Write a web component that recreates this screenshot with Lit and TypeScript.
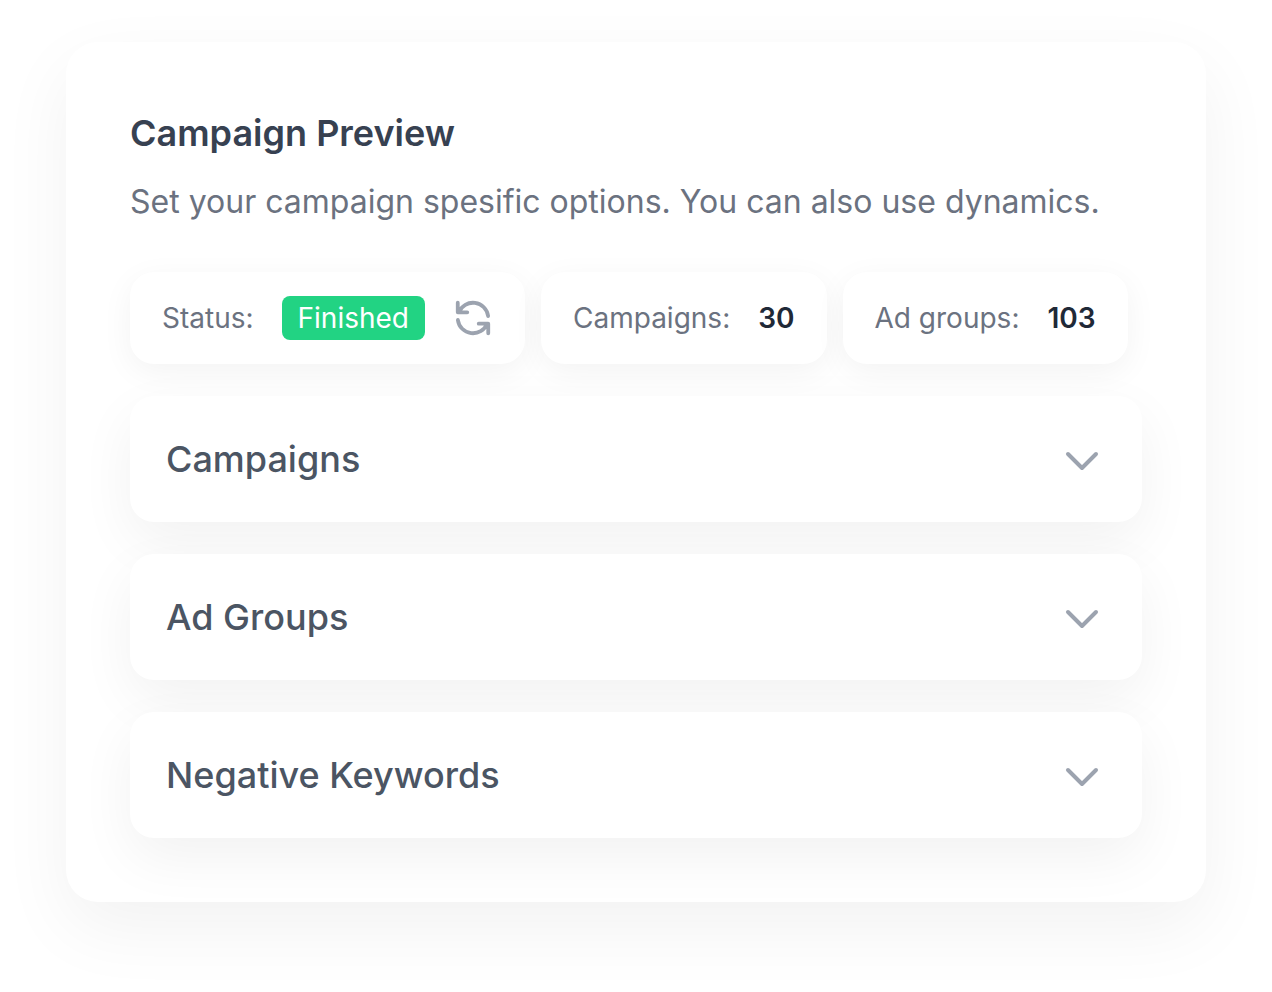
import { LitElement, html, css, svg } from "lit";
import { customElement, property, state } from "lit/decorators.js";

const refreshIcon = svg`
  <path d="M4 4v5h.582m15.356 2A8.001 8.001 0 004.582 9m0 0H9m11 11v-5h-.581m0 0a8.003 8.003 0 01-15.357-2m15.357 2H15" />
`;

@customElement("stat-card")
class StatCard extends LitElement {
  @property() label = "";

  static styles = css`
    :host {
      display: flex;
      align-items: center;
      gap: 28px;
      box-sizing: border-box;
      padding: 24px 32px;
      border-radius: 24px;
      background: #fff;
      box-shadow: 0 8px 32px rgba(0, 0, 0, 0.05);
      font-size: 28px;
      line-height: 44px;
      white-space: nowrap;
    }
    .label {
      color: #6b7280;
    }
  `;

  render() {
    return html`<span class="label">${this.label}:</span><slot></slot>`;
  }
}

@customElement("accordion-item")
class AccordionItem extends LitElement {
  @property() heading = "";
  @state() private open = false;

  static styles = css`
    :host {
      display: block;
      border-radius: 24px;
      background: #fff;
      box-shadow: 0 20px 56px rgba(0, 0, 0, 0.055);
    }
    .toggle {
      display: flex;
      align-items: center;
      justify-content: space-between;
      width: 100%;
      padding: 39px 36px;
      border: 0;
      border-radius: 24px;
      background: none;
      color: #4b5563;
      font: inherit;
      font-weight: 500;
      font-size: 36px;
      line-height: 48px;
      text-align: left;
      cursor: pointer;
    }
    .chevron {
      width: 48px;
      height: 48px;
      fill: none;
      stroke: #9ca3af;
      stroke-width: 2;
      stroke-linecap: round;
      stroke-linejoin: round;
    }
    .open {
      transform: rotate(180deg);
    }
    .body {
      margin: 0;
      padding: 0 36px 40px;
      color: #6b7280;
      font-size: 28px;
    }
  `;

  render() {
    return html`
      <button class="toggle" aria-expanded=${this.open} @click=${() => (this.open = !this.open)}>
        <span>${this.heading}</span>
        <svg class="chevron ${this.open ? "open" : ""}" viewBox="0 0 24 24" aria-hidden="true">
          <path d="M19 9.500l-7 7-7-7" />
        </svg>
      </button>
      ${this.open ? html`<div class="body"><slot></slot></div>` : null}
    `;
  }
}

@customElement("app-root")
class AppRoot extends LitElement {
  static styles = css`
    :host {
      display: block;
      box-sizing: border-box;
      min-height: 100vh;
      padding: 42px 66px 90px;
      background: #fff;
      font-family: Inter, sans-serif;
    }
    .card {
      padding: 64px;
      border-radius: 32px;
      background: #fff;
      box-shadow: 0 26px 72px rgba(0, 0, 0, 0.056);
    }
    .title {
      margin: 0;
      color: #374151;
      font-weight: 600;
      font-size: 36px;
      line-height: 54px;
    }
    .description {
      margin: 10px 0 0;
      color: #6b7280;
      font-size: 32px;
      line-height: 64px;
    }
    .stats {
      display: flex;
      flex-wrap: wrap;
      gap: 16px;
      margin: 38px 0 32px;
    }
    .badge {
      padding: 0 16px;
      border-radius: 8px;
      background: #22d383;
      color: #fff;
    }
    .value {
      color: #1f2937;
      font-weight: 600;
    }
    .refresh {
      display: flex;
      padding: 0;
      border: 0;
      background: none;
      cursor: pointer;
    }
    .icon {
      width: 40px;
      height: 40px;
      fill: none;
      stroke: #9ca3af;
      stroke-width: 2;
      stroke-linecap: round;
      stroke-linejoin: round;
    }
    .list {
      display: grid;
      gap: 32px;
    }
  `;

  render() {
    return html`
      <main class="card">
        <h1 class="title">Campaign Preview</h1>
        <p class="description">Set your campaign spesific options. You can also use dynamics.</p>
        <div class="stats">
          <stat-card label="Status">
            <span class="badge">Finished</span>
            <button class="refresh" aria-label="Refresh">
              <svg class="icon" viewBox="1.5 1.5 21 21" aria-hidden="true">${refreshIcon}</svg>
            </button>
          </stat-card>
          <stat-card label="Campaigns"><span class="value">30</span></stat-card>
          <stat-card label="Ad groups"><span class="value">103</span></stat-card>
        </div>
        <div class="list">
          <accordion-item heading="Campaigns"></accordion-item>
          <accordion-item heading="Ad Groups"></accordion-item>
          <accordion-item heading="Negative Keywords"></accordion-item>
        </div>
      </main>
    `;
  }
}
